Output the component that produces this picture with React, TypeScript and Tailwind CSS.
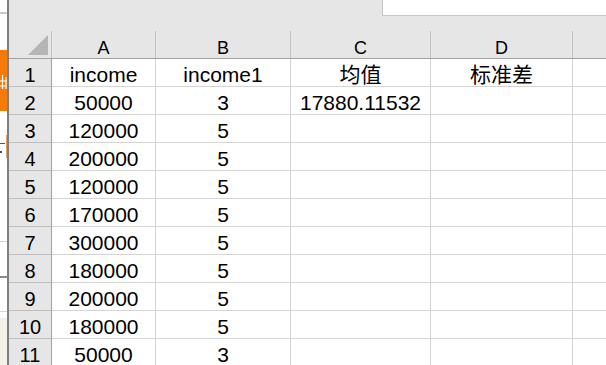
import React from "react"

const cols = [
  { key: "A", w: "w-[104px]" },
  { key: "B", w: "w-[135px]" },
  { key: "C", w: "w-[140px]" },
  { key: "D", w: "w-[142px]" },
]

const rows: string[][] = [
  ["income", "income1", "均值", ""],
  ["50000", "3", "17880.11532", ""],
  ["120000", "5", "", ""],
  ["200000", "5", "", ""],
  ["120000", "5", "", ""],
  ["170000", "5", "", ""],
  ["300000", "5", "", ""],
  ["180000", "5", "", ""],
  ["200000", "5", "", ""],
  ["180000", "5", "", ""],
  ["50000", "3", "", ""],
]

rows[0][3] = "标准差"

function LeftStrip() {
  return (
    <div className="w-[7px] h-full flex flex-col shrink-0 bg-white">
      <div className="h-[12px]" />
      <div className="h-[2px] bg-[#c9c9c9]" />
      <div className="h-[36px]" />
      <div className="h-[61px] bg-[#f47a0a] flex items-center">
        <svg width="7" height="16" viewBox="0 0 7 16" className="mt-[2px]">
          <path d="M2.5 1v14M0 7h7M0 12h7M6 3v12" stroke="#ffffff" strokeWidth="1.2" fill="none" />
        </svg>
      </div>
      <div className="h-[24px]" />
      <div className="h-[24px] relative">
        <div className="absolute left-[6px] top-0 w-[1px] h-[23px] bg-[#e8a060]" />
        <div className="absolute left-0 top-[8px] w-[5px] h-[1px] bg-[#555]" />
        <div className="absolute left-0 top-[16px] w-[2px] h-[2px] bg-[#3a4a7a]" />
      </div>
      <div className="h-[82px]" />
      <div className="h-[1px] bg-[#cfcfcf]" />
      <div className="h-[34px]" />
      <div className="h-[2px] bg-[#8a8a8a]" />
      <div className="h-[33px]" />
      <div className="h-[1px] bg-[#d6d6d6]" />
      <div className="h-[6px]" />
      <div className="flex-1 bg-[#f3f0ea]" />
    </div>
  )
}

export default function App() {
  const font = { fontFamily: '"Liberation Sans", "Noto Sans CJK SC", Arial, sans-serif' }
  return (
    <div className="w-[606px] h-[365px] overflow-hidden flex bg-white" style={font}>
      <LeftStrip />
      <div className="w-[2px] h-full bg-[#7f7f7f] shrink-0" />
      <div className="flex-1 flex flex-col bg-[#e6e6e6] text-black min-w-0">
        {/* top bar */}
        <div className="h-[31px] flex justify-end shrink-0">
          <div className="w-[224px] h-[16px] bg-white border-l border-b border-[#c6c6c6]" />
        </div>

        {/* column headers */}
        <div className="h-[28px] flex border-b border-[#a3a3a3] shrink-0">
          <div className="w-[43px] border-r border-[#c2c2c2] flex items-end justify-end pr-[3px] pb-[3px]">
            <svg width="20" height="20" viewBox="0 0 20 20">
              <polygon points="20,0 20,20 0,20" fill="#b5b5b5" />
            </svg>
          </div>
          {cols.map((c) => (
            <div
              key={c.key}
              className={`${c.w} border-r border-[#c2c2c2] flex items-center justify-center text-[18px] leading-[20px] pt-[7px]`}
            >
              {c.key}
            </div>
          ))}
          <div className="flex-1" />
        </div>

        {/* rows */}
        {rows.map((r, i) => (
          <div key={i} className="h-[28px] flex shrink-0">
            <div className="w-[43px] border-r border-b border-r-[#a0a0a0] border-b-[#bdbdbd] flex items-center justify-center text-[20px] leading-[24px] pt-[4px]">
              {i + 1}
            </div>
            {cols.map((c, j) => (
              <div
                key={c.key}
                className={`${c.w} bg-white border-r border-b border-[#d4d4d4] flex items-center justify-center text-[21px] leading-[24px] pt-[4px] whitespace-nowrap`}
              >
                {r[j]}
              </div>
            ))}
            <div className="flex-1 bg-white border-b border-[#d4d4d4]" />
          </div>
        ))}
      </div>
    </div>
  )
}
